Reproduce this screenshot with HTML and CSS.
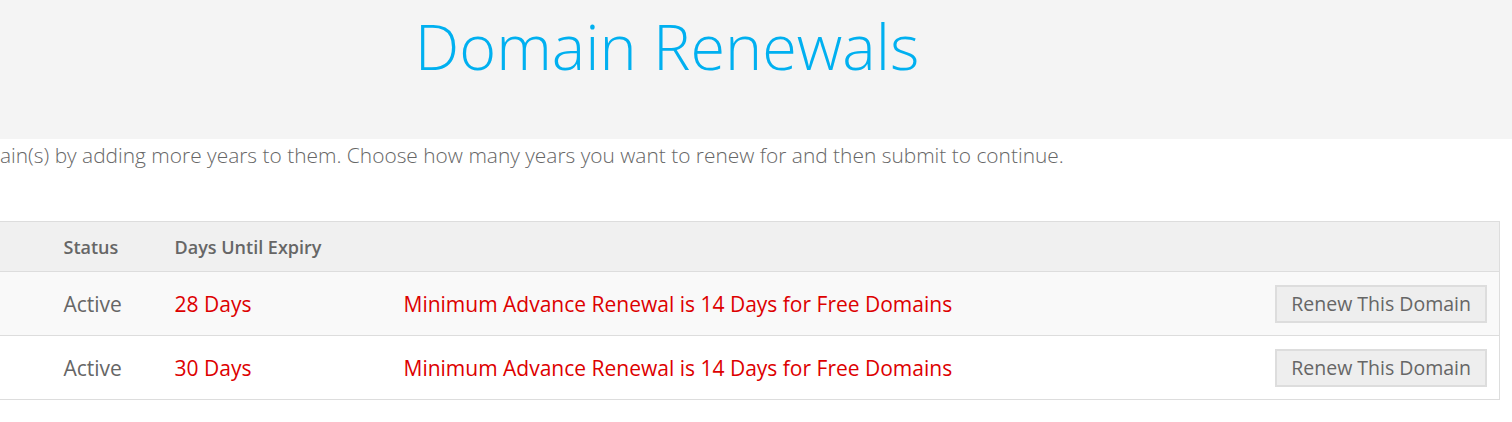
FILE: index.html
```html
<!DOCTYPE html>
<html lang="en">
<head>
<meta charset="utf-8">
<title>Domain Renewals</title>
<link rel="stylesheet" href="styles.css">
</head>
<body>
<div class="page">
  <header class="hero">
    <h1 class="hero-title">Domain Renewals</h1>
  </header>
  <main class="content">
    <p class="intro"><span class="intro-lead">Renew your dom</span>ain(s) by adding more years to them. Choose how many years you want to renew for and then submit to continue.</p>
    <table class="renewals">
      <colgroup>
        <col class="col-domain">
        <col class="col-status">
        <col class="col-days">
        <col class="col-note">
        <col class="col-action">
      </colgroup>
      <thead>
        <tr>
          <th>Domain</th>
          <th>Status</th>
          <th>Days Until Expiry</th>
          <th></th>
          <th></th>
        </tr>
      </thead>
      <tbody>
        <tr class="row-alt">
          <td></td>
          <td>Active</td>
          <td class="warn">28 Days</td>
          <td class="warn">Minimum Advance Renewal is 14 Days for Free Domains</td>
          <td class="action"><button class="btn" type="button">Renew This Domain</button></td>
        </tr>
        <tr>
          <td></td>
          <td>Active</td>
          <td class="warn">30 Days</td>
          <td class="warn">Minimum Advance Renewal is 14 Days for Free Domains</td>
          <td class="action"><button class="btn" type="button">Renew This Domain</button></td>
        </tr>
      </tbody>
    </table>
  </main>
</div>
</body>
</html>
```

FILE: styles.css
```css
html, body {
  margin: 0;
  padding: 0;
  background: #ffffff;
  overflow: hidden;
}

body {
  font-family: "Open Sans", "Liberation Sans", sans-serif;
  color: #666666;
}

.page {
  width: 1666px;
  margin-left: -166px;
}

.hero {
  background: #f4f4f4;
  height: 139px;
  box-sizing: border-box;
  padding-top: 3px;
  margin-right: -200px;
  padding-right: 200px;
}

.hero-title {
  margin: 0;
  font-weight: 300;
  font-size: 63px;
  line-height: 86px;
  color: #00b0f0;
  text-align: center;
}

.intro {
  margin: 0;
  padding-top: 2px;
  font-weight: 300;
  font-size: 20.9px;
  line-height: 28px;
  color: #666666;
  white-space: nowrap;
}

.intro-lead {
  display: inline-block;
  width: 166px;
  text-align: right;
  overflow: hidden;
  vertical-align: top;
}

.renewals {
  margin-top: 52px;
  width: 100%;
  table-layout: fixed;
  border-collapse: collapse;
  border: 1px solid #dddddd;
}

.col-domain { width: 215px; }
.col-status { width: 111px; }
.col-days { width: 229px; }
.col-note { width: auto; }
.col-action { width: 260px; }

.renewals th,
.renewals td {
  padding: 0 14px;
  text-align: left;
  vertical-align: middle;
  white-space: nowrap;
}

.renewals thead tr {
  background: #f0f0f0;
  height: 50px;
}

.renewals th {
  font-size: 18px;
  font-weight: 600;
  color: #666666;
  border-bottom: 1px solid #dddddd;
}

.renewals td {
  font-size: 21px;
  color: #666666;
  border-bottom: 1px solid #dddddd;
}

.renewals tbody tr {
  height: 64px;
  background: #ffffff;
}

.renewals tbody tr.row-alt {
  background: #f9f9f9;
}

.renewals td.warn {
  color: #dd0000;
}

.renewals td.action {
  text-align: right;
  padding-right: 12px;
}

.btn {
  font-family: "Open Sans", "Liberation Sans", sans-serif;
  font-size: 19.5px;
  color: #666666;
  background: #eeeeee;
  border: 2px solid #dddddd;
  padding: 0 14px;
  height: 38px;
  line-height: 34px;
  cursor: pointer;
}
```
